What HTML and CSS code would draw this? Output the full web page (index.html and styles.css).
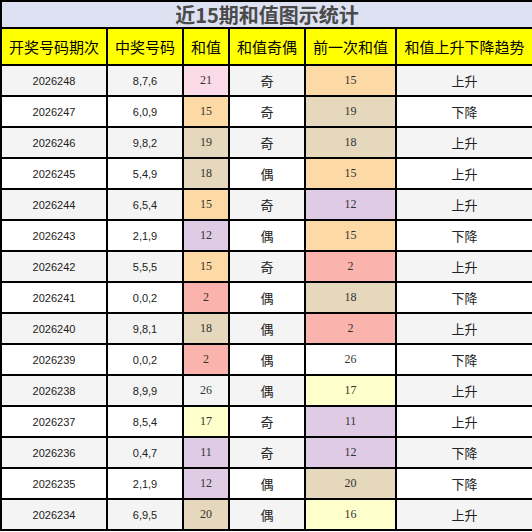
FILE: index.html
```html
<!DOCTYPE html>
<html lang="zh-CN">
	<head>
		<meta charset="UTF-8">
		<title>近15期和值图示统计</title>
		<link rel="stylesheet" href="styles.css">
	</head>
	<body>
		<table class="stat">
			<colgroup>
				<col class="w-issue">
				<col class="w-num">
				<col class="w-sum">
				<col class="w-odd">
				<col class="w-prev">
				<col class="w-trend">
			</colgroup>
			<thead>
				<tr class="title-row"><th colspan="6">近15期和值图示统计</th></tr>
				<tr class="head-row">
					<th>开奖号码期次</th>
					<th>中奖号码</th>
					<th>和值</th>
					<th>和值奇偶</th>
					<th>前一次和值</th>
					<th>和值上升下降趋势</th>
				</tr>
			</thead>
			<tbody>
				<tr><td class="num">2026248</td><td class="num">8,7,6</td><td class="val c-pink">21</td><td class="cn">奇</td><td class="val c-peach">15</td><td class="cn">上升</td></tr>
				<tr><td class="num">2026247</td><td class="num">6,0,9</td><td class="val c-peach">15</td><td class="cn">奇</td><td class="val c-tan">19</td><td class="cn">下降</td></tr>
				<tr><td class="num">2026246</td><td class="num">9,8,2</td><td class="val c-tan">19</td><td class="cn">奇</td><td class="val c-tan">18</td><td class="cn">上升</td></tr>
				<tr><td class="num">2026245</td><td class="num">5,4,9</td><td class="val c-tan">18</td><td class="cn">偶</td><td class="val c-peach">15</td><td class="cn">上升</td></tr>
				<tr><td class="num">2026244</td><td class="num">6,5,4</td><td class="val c-peach">15</td><td class="cn">奇</td><td class="val c-lav">12</td><td class="cn">上升</td></tr>
				<tr><td class="num">2026243</td><td class="num">2,1,9</td><td class="val c-lav">12</td><td class="cn">偶</td><td class="val c-peach">15</td><td class="cn">下降</td></tr>
				<tr><td class="num">2026242</td><td class="num">5,5,5</td><td class="val c-peach">15</td><td class="cn">奇</td><td class="val c-red">2</td><td class="cn">上升</td></tr>
				<tr><td class="num">2026241</td><td class="num">0,0,2</td><td class="val c-red">2</td><td class="cn">偶</td><td class="val c-tan">18</td><td class="cn">下降</td></tr>
				<tr><td class="num">2026240</td><td class="num">9,8,1</td><td class="val c-tan">18</td><td class="cn">偶</td><td class="val c-red">2</td><td class="cn">上升</td></tr>
				<tr><td class="num">2026239</td><td class="num">0,0,2</td><td class="val c-red">2</td><td class="cn">偶</td><td class="val">26</td><td class="cn">下降</td></tr>
				<tr><td class="num">2026238</td><td class="num">8,9,9</td><td class="val">26</td><td class="cn">偶</td><td class="val c-yel">17</td><td class="cn">上升</td></tr>
				<tr><td class="num">2026237</td><td class="num">8,5,4</td><td class="val c-yel">17</td><td class="cn">奇</td><td class="val c-lav">11</td><td class="cn">上升</td></tr>
				<tr><td class="num">2026236</td><td class="num">0,4,7</td><td class="val c-lav">11</td><td class="cn">奇</td><td class="val c-lav">12</td><td class="cn">下降</td></tr>
				<tr><td class="num">2026235</td><td class="num">2,1,9</td><td class="val c-lav">12</td><td class="cn">偶</td><td class="val c-tan">20</td><td class="cn">下降</td></tr>
				<tr><td class="num">2026234</td><td class="num">6,9,5</td><td class="val c-tan">20</td><td class="cn">偶</td><td class="val c-yel">16</td><td class="cn">上升</td></tr>
			</tbody>
		</table>
	</body>
</html>
```

FILE: styles.css
```css
*{
	margin: 0;
	padding: 0;
}
body{
	background: #fff;
	font-family: "Noto Sans CJK SC", sans-serif;
}
.stat{
	width: 532px;
	table-layout: fixed;
	border-collapse: collapse;
	color: #222;
}
.stat th,
.stat td{
	border: 2px solid #000;
	text-align: center;
	vertical-align: middle;
	padding: 0;
}
.w-issue{ width: 106px; }
.w-num{ width: 76px; }
.w-sum{ width: 46px; }
.w-odd{ width: 76px; }
.w-prev{ width: 91px; }
.w-trend{ width: 137px; }

/* 标题 */
.title-row th{
	height: 25px;
	background: #dde1f1;
	color: #4a4a4a;
	font-size: 20px;
	font-weight: bold;
	line-height: 24px;
}
/* 表头 */
.head-row th{
	height: 35px;
	background: #ffff00;
	color: #000;
	font-size: 15px;
	font-weight: normal;
}
.stat tbody td{
	height: 29px;
}
.stat tbody tr:nth-child(odd){
	background: #f4f4f4;
}
.stat tbody tr:nth-child(even){
	background: #fff;
}
.num{
	font-family: "Liberation Sans", sans-serif;
	font-size: 11px;
	color: #222;
}
.val{
	font-family: "Liberation Serif", serif;
	font-size: 12px;
	color: #333;
}
.cn{
	font-size: 13px;
	color: #222;
}
.c-pink{ background: #fcdbe9; }
.c-peach{ background: #fdd9a6; }
.c-tan{ background: #e6d8bc; }
.c-lav{ background: #dfcce4; }
.c-red{ background: #fbb4ad; }
.c-yel{ background: #ffffcc; }
```
